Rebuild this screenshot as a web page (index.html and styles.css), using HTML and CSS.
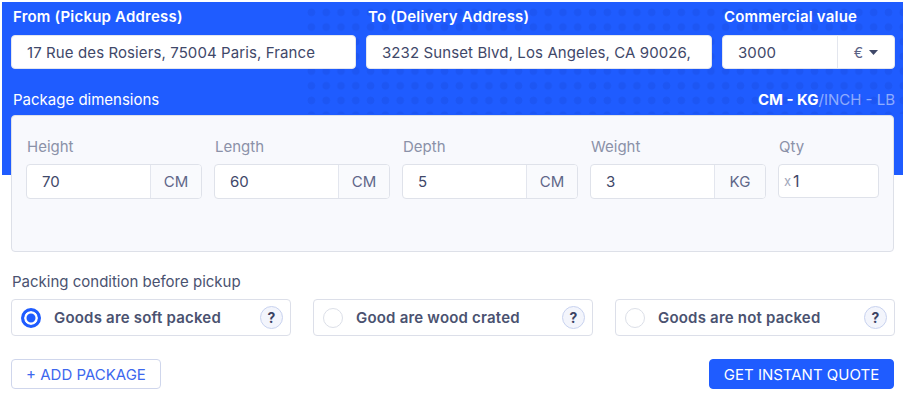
FILE: index.html
```html
<!DOCTYPE html>
<html lang="en">
<head>
<meta charset="utf-8">
<title>Quote form</title>
<link rel="stylesheet" href="styles.css">
</head>
<body>
<form class="quote">
  <div class="address-row">
    <div class="field">
      <label class="hero-label">From (Pickup Address)</label>
      <div class="box-input"><span class="value">17 Rue des Rosiers, 75004 Paris, France</span></div>
    </div>
    <div class="field">
      <label class="hero-label">To (Delivery Address)</label>
      <div class="box-input"><span class="value">3232 Sunset Blvd, Los Angeles, CA 90026,</span></div>
    </div>
    <div class="field">
      <label class="hero-label">Commercial value</label>
      <div class="box-input split">
        <span class="value grow">3000</span>
        <span class="currency">€ <svg class="caret" width="9" height="5" viewBox="0 0 9 5"><path d="M0 0h9L4.5 5z" fill="#3f4869"/></svg></span>
      </div>
    </div>
  </div>

  <div class="dim-head">
    <span class="dim-title">Package dimensions</span>
    <span class="units"><b>CM - KG</b><span class="off">/INCH - LB</span></span>
  </div>

  <div class="dim-box">
    <div class="dim-grid">
      <div class="dim">
        <span class="dim-label">Height</span>
        <div class="unit-input"><span class="num">70</span><span class="unit">CM</span></div>
      </div>
      <div class="dim">
        <span class="dim-label">Length</span>
        <div class="unit-input"><span class="num">60</span><span class="unit">CM</span></div>
      </div>
      <div class="dim">
        <span class="dim-label">Depth</span>
        <div class="unit-input"><span class="num">5</span><span class="unit">CM</span></div>
      </div>
      <div class="dim">
        <span class="dim-label">Weight</span>
        <div class="unit-input"><span class="num">3</span><span class="unit">KG</span></div>
      </div>
      <div class="dim">
        <span class="dim-label">Qty</span>
        <div class="qty-input"><span class="times">x</span><span class="num">1</span></div>
      </div>
    </div>
  </div>

  <div class="pack-label">Packing condition before pickup</div>
  <div class="pack-grid">
    <div class="pack-card">
      <span class="radio checked"></span>
      <span class="pack-text">Goods are soft packed</span>
      <span class="help">?</span>
    </div>
    <div class="pack-card">
      <span class="radio"></span>
      <span class="pack-text">Good are wood crated</span>
      <span class="help">?</span>
    </div>
    <div class="pack-card">
      <span class="radio"></span>
      <span class="pack-text">Goods are not packed</span>
      <span class="help">?</span>
    </div>
  </div>

  <div class="actions">
    <button type="button" class="btn-outline">+ ADD PACKAGE</button>
    <button type="button" class="btn-primary">GET INSTANT QUOTE</button>
  </div>
</form>
</body>
</html>
```

FILE: styles.css
```css
* { box-sizing: border-box; }

body {
  margin: 0;
  background: #ffffff;
  font-family: Inter, "Noto Sans", "Liberation Sans", sans-serif;
  font-size: 15px;
  color: #3f4869;
}

.quote {
  position: relative;
  margin: 2px 3px 0 2px;
  padding: 5px 8px 0 9px;
  background: linear-gradient(#1f5cff, #1f5cff) top left / 100% 173px no-repeat;
}

.quote::before {
  content: "";
  position: absolute;
  top: 0;
  left: 300px;
  width: 601px;
  height: 112px;
  background-image: radial-gradient(circle, rgba(20, 60, 190, 0.18) 3.6px, transparent 4.2px);
  background-size: 14.8px 14.7px;
  background-position: 2px 3px;
  pointer-events: none;
}

.address-row,
.dim-head,
.dim-box,
.pack-label,
.pack-grid,
.actions { position: relative; }

.address-row {
  display: grid;
  grid-template-columns: 345px 346px 1fr;
  column-gap: 10px;
}

.field { display: flex; flex-direction: column; }

.hero-label {
  color: #ffffff;
  font-weight: 600;
  font-size: 15px;
  letter-spacing: 0.2px;
  line-height: 20px;
  padding-left: 2px;
  margin-bottom: 8px;
}

.box-input {
  height: 34px;
  background: #ffffff;
  border: 1px solid #e3e6ee;
  border-radius: 4px;
  display: flex;
  align-items: center;
  padding: 0 15px;
  overflow: hidden;
  white-space: nowrap;
}

.box-input .value { color: #3f4869; font-size: 15px; letter-spacing: 0.1px; }

.box-input.split { padding: 0; }
.box-input.split .grow { flex: 1; padding-left: 15px; }

.currency {
  width: 57px;
  height: 100%;
  border-left: 1px solid #e3e6ee;
  display: flex;
  align-items: center;
  justify-content: center;
  gap: 6px;
  color: #5a6285;
  font-size: 14px;
}

.caret { display: block; }

.dim-head {
  display: flex;
  justify-content: space-between;
  align-items: center;
  margin-top: 20px;
  height: 20px;
  padding-left: 2px;
}

.dim-title { color: #ffffff; font-size: 15px; }

.units { font-size: 15px; color: #ffffff; }
.units b { font-weight: 700; }
.units .off { color: rgba(255, 255, 255, 0.5); }

.dim-box {
  margin-top: 6px;
  margin-right: 1px;
  height: 137px;
  background: #f8f9fd;
  border: 1px solid #dde0e8;
  border-radius: 4px;
  padding: 21px 14px 0 14px;
}

.dim-grid {
  display: grid;
  grid-template-columns: repeat(4, 176px) 101px;
  column-gap: 12px;
}

.dim { display: flex; flex-direction: column; }

.dim-label {
  color: #8b91a8;
  font-size: 15px;
  line-height: 20px;
  margin-bottom: 7px;
  padding-left: 1px;
}

.unit-input,
.qty-input {
  height: 35px;
  background: #ffffff;
  border: 1px solid #dfe2ea;
  border-radius: 4px;
  display: flex;
  align-items: center;
  overflow: hidden;
}

.unit-input .num { flex: 1; padding-left: 15px; color: #3f4869; font-size: 15px; }

.unit {
  width: 51px;
  height: 100%;
  border-left: 1px solid #e3e6ee;
  background: #f9fafd;
  display: flex;
  align-items: center;
  justify-content: center;
  color: #5f6789;
  font-size: 15px;
}

.qty-input { height: 34px; padding-left: 5px; }
.qty-input .times { color: #a3a8bb; font-size: 13px; margin-right: 2px; }
.qty-input .num { color: #3f4869; font-size: 16px; }

.pack-label {
  margin-top: 20px;
  line-height: 20px;
  color: #4a5270;
  font-size: 15px;
  padding-left: 1px;
}

.pack-grid {
  margin-top: 7px;
  display: grid;
  grid-template-columns: repeat(3, 1fr);
  column-gap: 22px;
}

.pack-card {
  height: 37px;
  background: #ffffff;
  border: 1px solid #dcdfe9;
  border-radius: 4px;
  display: flex;
  align-items: center;
  padding: 0 7px 0 9px;
}

.radio {
  width: 20px;
  height: 20px;
  border-radius: 50%;
  border: 1.5px solid #dcdfe8;
  background: #ffffff;
  flex: none;
}

.radio.checked {
  border: 3px solid #1f5cff;
  background: #1f5cff;
  box-shadow: inset 0 0 0 2.5px #ffffff;
}

.pack-text {
  flex: 1;
  margin-left: 13px;
  font-weight: 600;
  color: #4a5270;
  font-size: 15px;
  letter-spacing: 0.2px;
}

.help {
  width: 23px;
  height: 23px;
  border-radius: 50%;
  background: #f3f5fc;
  border: 1px solid #c8d2ef;
  display: flex;
  align-items: center;
  justify-content: center;
  font-weight: 700;
  font-size: 14px;
  color: #3a4262;
  flex: none;
}

.actions {
  margin-top: 23px;
  display: flex;
  justify-content: space-between;
  padding-right: 1px;
}

.btn-outline,
.btn-primary {
  height: 30px;
  border-radius: 4px;
  font-family: inherit;
  font-size: 15px;
  font-weight: 400;
  cursor: pointer;
  padding: 0;
}

.btn-outline {
  width: 150px;
  background: #ffffff;
  border: 1px solid #cfd6ec;
  color: #3d68ee;
}

.btn-primary {
  width: 185px;
  background: #1f5cff;
  border: 1px solid #1f5cff;
  color: #ffffff;
}
```
